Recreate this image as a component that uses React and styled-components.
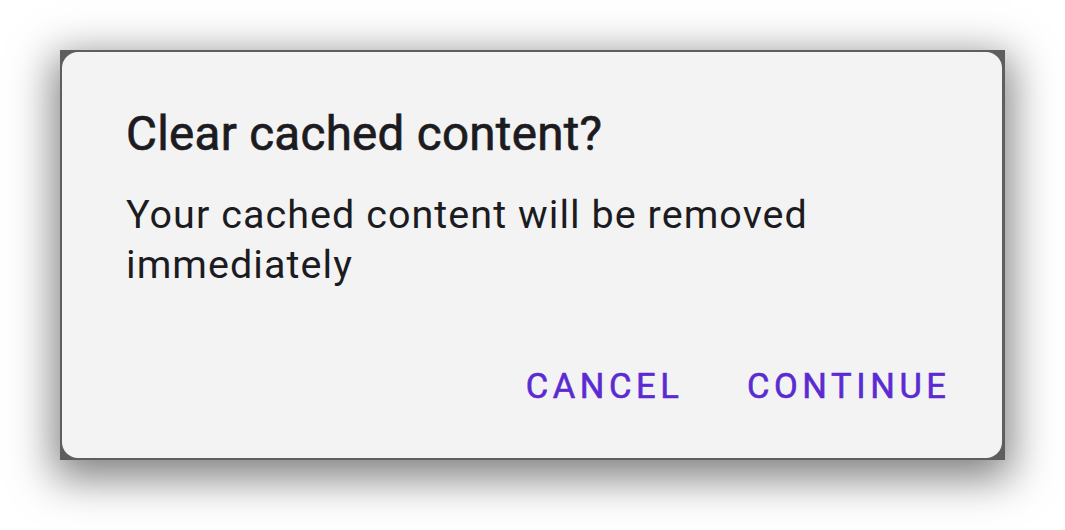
import styled, { createGlobalStyle } from "styled-components"

const GlobalStyle = createGlobalStyle`
  html, body {
    margin: 0;
    padding: 0;
    background: #ffffff;
  }
  body {
    font-family: Roboto, "Noto Sans", sans-serif;
  }
`

const Stage = styled.div`
  width: 1065px;
  height: 530px;
  padding: 50px 0 0 60px;
  box-sizing: border-box;
  overflow: hidden;
`

const Scrim = styled.div`
  width: 945px;
  height: 410px;
  box-sizing: border-box;
  padding: 2px 3px 2px 2px;
  background: #5e5e5e;
  box-shadow: 0 12px 40px 6px rgba(0, 0, 0, 0.5);
  display: flex;
`

const Dialog = styled.div`
  flex: 1;
  background: #f3f3f3;
  border-radius: 16px;
  padding: 54px 56px 0 64px;
  display: flex;
  flex-direction: column;
`

// medium weight: regular face thickened with a thin stroke
const Title = styled.h2`
  margin: 0;
  font-size: 47.5px;
  line-height: 56px;
  font-weight: 400;
  -webkit-text-stroke: 0.7px currentColor;
  color: #1c1b1f;
  letter-spacing: 0.3px;
`

const Message = styled.p`
  margin: 28px 0 0;
  font-size: 39.5px;
  line-height: 50px;
  font-weight: 400;
  color: #1c1b1f;
  letter-spacing: 1.05px;
  max-width: 720px;
`

const Actions = styled.div`
  margin-top: 76px;
  display: flex;
  justify-content: flex-end;
  gap: 68px;
`

const TextButton = styled.button`
  border: 0;
  background: none;
  padding: 0;
  margin: 0;
  font-family: Roboto, "Noto Sans", sans-serif;
  font-size: 34.5px;
  line-height: 40px;
  font-weight: 400;
  -webkit-text-stroke: 0.6px currentColor;
  letter-spacing: 4.6px;
  margin-right: -4.6px;
  text-transform: uppercase;
  color: #5b2bd2;
  cursor: pointer;
`

export default function App() {
  return (
    <>
      <GlobalStyle />
      <Stage>
        <Scrim>
          <Dialog>
            <Title>Clear cached content?</Title>
            <Message>Your cached content will be removed immediately</Message>
            <Actions>
              <TextButton>Cancel</TextButton>
              <TextButton>Continue</TextButton>
            </Actions>
          </Dialog>
        </Scrim>
      </Stage>
    </>
  )
}
